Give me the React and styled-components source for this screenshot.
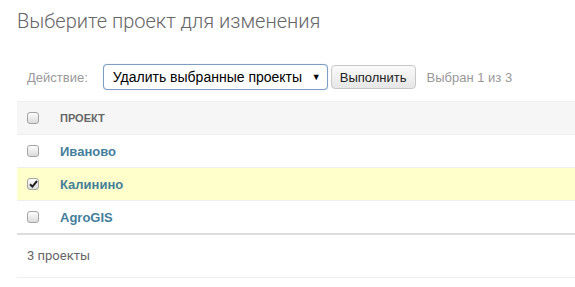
import React, { useState } from "react"
import styled, { createGlobalStyle } from "styled-components"

const GlobalStyle = createGlobalStyle`
  body {
    margin: 0;
    background: #fff;
    font-family: "Liberation Sans", Arial, sans-serif;
    color: #333;
  }
`

const Page = styled.div`
  padding: 8px 0 0 17px;
`

const Title = styled.h1`
  margin: 0 0 19px;
  font-family: Roboto, "Open Sans", sans-serif;
  font-weight: 300;
  font-size: 20px;
  line-height: 26px;
  color: #666;
`

const Actions = styled.div`
  display: flex;
  align-items: center;
  height: 48px;
  padding: 0 0 0 10px;
  font-size: 13px;
  color: #999;
`

const Label = styled.label`
  margin-right: 15px;
`

const Select = styled.div`
  display: flex;
  align-items: center;
  justify-content: space-between;
  box-sizing: border-box;
  width: 225px;
  height: 26px;
  padding: 0 6px 0 9px;
  border: 1px solid #7d9dc4;
  border-radius: 4px;
  box-shadow: 0 0 1px #a9c2e0;
  background: #fff;
  color: #000;
  font-size: 14px;
`

const Arrow = styled.span`
  font-size: 9px;
`

const Button = styled.button`
  box-sizing: border-box;
  height: 24px;
  margin-left: 3px;
  padding: 0 8px;
  border: 1px solid #c8c8c8;
  border-radius: 4px;
  background: linear-gradient(#fafafa, #e6e6e6);
  font-family: "Liberation Sans", Arial, sans-serif;
  font-size: 13px;
  color: #222;
`

const Counter = styled.span`
  margin-left: 11px;
`

const Table = styled.div`
  border-top: 1px solid #eee;
  border-bottom: 2px solid #ddd;
`

const Row = styled.div`
  display: flex;
  align-items: center;
  height: 32px;
  border-top: ${p => (p.$first ? "none" : "1px solid #eee")};
  background: ${p => (p.$head ? "#f6f6f6" : p.$selected ? "#ffffcc" : "#fff")};
`

const CheckCell = styled.div`
  width: 33px;
  padding-left: 10px;
  display: flex;
  align-items: center;
`

const Box = styled.span`
  box-sizing: border-box;
  width: 12px;
  height: 12px;
  border: 1px solid #a4a4a4;
  border-radius: 3px;
  background: linear-gradient(#fcfcfc, #dcdcdc);
  display: flex;
  align-items: center;
  justify-content: center;
`

const HeadText = styled.span`
  font-size: 11px;
  font-weight: bold;
  color: #666;
`

const Link = styled.a`
  font-size: 13px;
  font-weight: bold;
  color: #447e9b;
  text-decoration: none;
`

const Footer = styled.p`
  margin: 0;
  padding: 0 10px;
  height: 42px;
  line-height: 42px;
  border-bottom: 1px solid #eee;
  font-family: Roboto, "Open Sans", sans-serif;
  font-size: 13px;
  color: #666;
`

const Checkbox = ({ checked }) => (
  <Box>
    {checked && (
      <svg width="9" height="8" viewBox="0 0 9 8">
        <path d="M1 4.2 L3.4 6.6 L8 1" fill="none" stroke="#222" strokeWidth="2" />
      </svg>
    )}
  </Box>
)

const projects = [
  { name: "Иваново", checked: false },
  { name: "Калинино", checked: true },
  { name: "AgroGIS", checked: false },
]

export default function App() {
  const [rows] = useState(projects)
  return (
    <Page>
      <GlobalStyle />
      <Title>Выберите проект для изменения</Title>
      <Actions>
        <Label>Действие:</Label>
        <Select>
          Удалить выбранные проекты
          <Arrow>▼</Arrow>
        </Select>
        <Button>Выполнить</Button>
        <Counter>Выбран 1 из 3</Counter>
      </Actions>
      <Table>
        <Row $head $first>
          <CheckCell><Checkbox /></CheckCell>
          <HeadText>ПРОЕКТ</HeadText>
        </Row>
        {rows.map(r => (
          <Row key={r.name} $selected={r.checked}>
            <CheckCell><Checkbox checked={r.checked} /></CheckCell>
            <Link href="#">{r.name}</Link>
          </Row>
        ))}
      </Table>
      <Footer>3 проекты</Footer>
    </Page>
  )
}
